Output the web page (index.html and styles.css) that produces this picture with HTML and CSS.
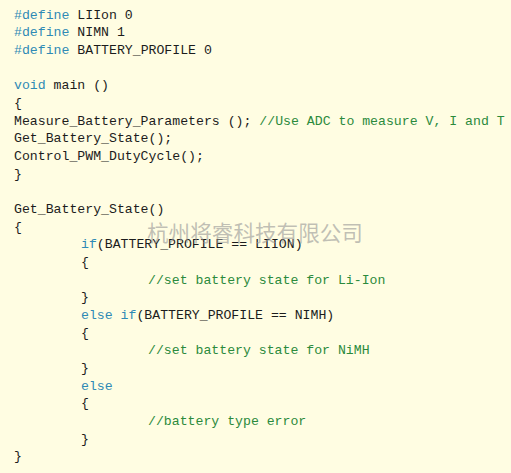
FILE: index.html
```html
<!DOCTYPE html>
<html>
<head>
<meta charset="utf-8">
<link rel="stylesheet" href="styles.css">
</head>
<body>
<div class="code">
<div class="ln"><span class="kw">#define</span> LIIon 0</div>
<div class="ln"><span class="kw">#define</span> NIMN 1</div>
<div class="ln"><span class="kw">#define</span> BATTERY_PROFILE 0</div>
<div class="ln"> </div>
<div class="ln"><span class="kw">void</span> main ()</div>
<div class="ln">{</div>
<div class="ln">Measure_Battery_Parameters (); <span class="cm">//Use ADC to measure V, I and T</span></div>
<div class="ln">Get_Battery_State();</div>
<div class="ln">Control_PWM_DutyCycle();</div>
<div class="ln">}</div>
<div class="ln"> </div>
<div class="ln">Get_Battery_State()</div>
<div class="ln">{</div>
<div class="ln i1"><span class="kw">if</span>(BATTERY_PROFILE == LIION)</div>
<div class="ln i1">{</div>
<div class="ln i2"><span class="cm">//set battery state for Li-Ion</span></div>
<div class="ln i1">}</div>
<div class="ln i1"><span class="kw">else if</span>(BATTERY_PROFILE == NIMH)</div>
<div class="ln i1">{</div>
<div class="ln i2"><span class="cm">//set battery state for NiMH</span></div>
<div class="ln i1">}</div>
<div class="ln i1"><span class="kw">else</span></div>
<div class="ln i1">{</div>
<div class="ln i2"><span class="cm">//battery type error</span></div>
<div class="ln i1">}</div>
<div class="ln">}</div>
<div class="watermark">杭州将睿科技有限公司</div>
</div>
</body>
</html>
```
FILE: styles.css
```css
html, body {
  margin: 0;
  padding: 0;
  background: #fffde2;
}
body {
  width: 511px;
  height: 473px;
  overflow: hidden;
}
.code {
  position: relative;
  padding: 6.7px 0 0 14px;
  font-family: "Courier New", "Nimbus Mono PS", "Nimbus Mono L", "FreeMono", "Courier", "Liberation Mono", monospace;
  font-size: 13.2px;
  line-height: 17.68px;
  color: #1c1c1c;
}
.ln {
  white-space: pre;
  height: 17.68px;
}
.i1 { padding-left: 67px; }
.i2 { padding-left: 134px; }
.kw { color: #2f8ab5; }
.cm { color: #2b8a3c; }
.watermark {
  position: absolute;
  left: 147px;
  top: 221px;
  font-family: "Noto Sans CJK SC", sans-serif;
  font-size: 21.6px;
  line-height: 22px;
  color: rgba(150, 150, 150, 0.6);
  white-space: nowrap;
}
```
